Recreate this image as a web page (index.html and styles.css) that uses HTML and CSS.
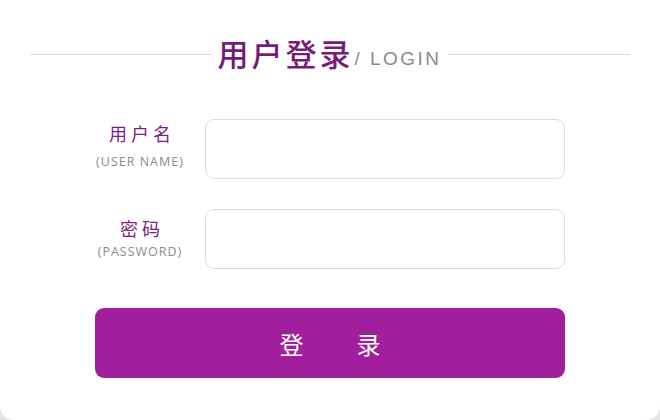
FILE: index.html
```html
<!DOCTYPE html>
<html lang="zh">
<head>
<meta charset="utf-8">
<title>用户登录</title>
<link rel="stylesheet" href="styles.css">
</head>
<body>
<div class="page">
  <div class="head">
    <span class="rule"></span>
    <h1 class="title"><span class="title-cn">用户登录</span><span class="title-en">/ LOGIN</span></h1>
    <span class="rule"></span>
  </div>
  <form class="form">
    <div class="row">
      <label class="label" for="user">
        <span class="label-cn">用户名</span>
        <span class="label-en">(USER NAME)</span>
      </label>
      <input class="field" id="user" type="text">
    </div>
    <div class="row">
      <label class="label label-pw" for="pw">
        <span class="label-cn">密码</span>
        <span class="label-en">(PASSWORD)</span>
      </label>
      <input class="field" id="pw" type="password">
    </div>
    <button class="submit" type="button"><span>登</span><span>录</span></button>
  </form>
</div>
</body>
</html>
```
FILE: styles.css
```css
html {
  background: #e4e4e4;
}
body {
  margin: 0;
  font-family: "Noto Sans CJK SC", "Noto Sans", sans-serif;
}
.page {
  width: 660px;
  height: 420px;
  background: #fff;
  border-radius: 0 0 14px 14px;
  box-sizing: border-box;
  padding: 34px 30px 0;
}
.head {
  display: flex;
  align-items: center;
  height: 40px;
}
.rule {
  flex: 1;
  height: 1px;
  background: #dcdcdc;
}
.title {
  margin: 0 6px 0 5px;
  display: flex;
  align-items: baseline;
  font-weight: normal;
  line-height: 40px;
  position: relative;
  top: 2px;
}
.title-cn {
  font-size: 31px;
  letter-spacing: 3px;
  color: #771b7a;
  font-weight: 500;
}
.title-en {
  font-family: "Liberation Sans", Arial, sans-serif;
  font-size: 19px;
  letter-spacing: 2.5px;
  color: #8a8a8a;
  margin-left: 1px;
  position: relative;
  top: -1px;
}
.form {
  width: 470px;
  margin: 45px auto 0;
  display: flex;
  flex-direction: column;
  gap: 30px;
}
.row {
  display: flex;
  gap: 20px;
  height: 60px;
}
.label {
  width: 90px;
  display: flex;
  flex-direction: column;
  align-items: center;
  padding-top: 1px;
  box-sizing: border-box;
}
.label-cn {
  font-size: 18px;
  line-height: 26px;
  letter-spacing: 4px;
  margin-left: 4px;
  color: #7d1e80;
}
.label-pw .label-cn {
  margin-top: 5px;
  margin-bottom: -5px;
}
.label-en {
  margin-top: 6px;
  font-family: "Open Sans", "Noto Sans", sans-serif;
  font-size: 12.5px;
  line-height: 20px;
  letter-spacing: 1px;
  color: #8c8c8c;
}
.field {
  width: 360px;
  height: 60px;
  box-sizing: border-box;
  border: 1px solid #dcdcdc;
  border-radius: 9px;
  background: #fff;
  margin: 0;
  padding: 0 12px;
  outline: none;
}
.submit {
  margin-top: 9px;
  height: 70px;
  width: 470px;
  border: none;
  border-radius: 9px;
  background: #a11f9d;
  color: #fff;
  font-family: "Noto Sans CJK SC", sans-serif;
  font-size: 24px;
  display: flex;
  justify-content: center;
  align-items: center;
  gap: 53px;
  padding: 0;
}
```
